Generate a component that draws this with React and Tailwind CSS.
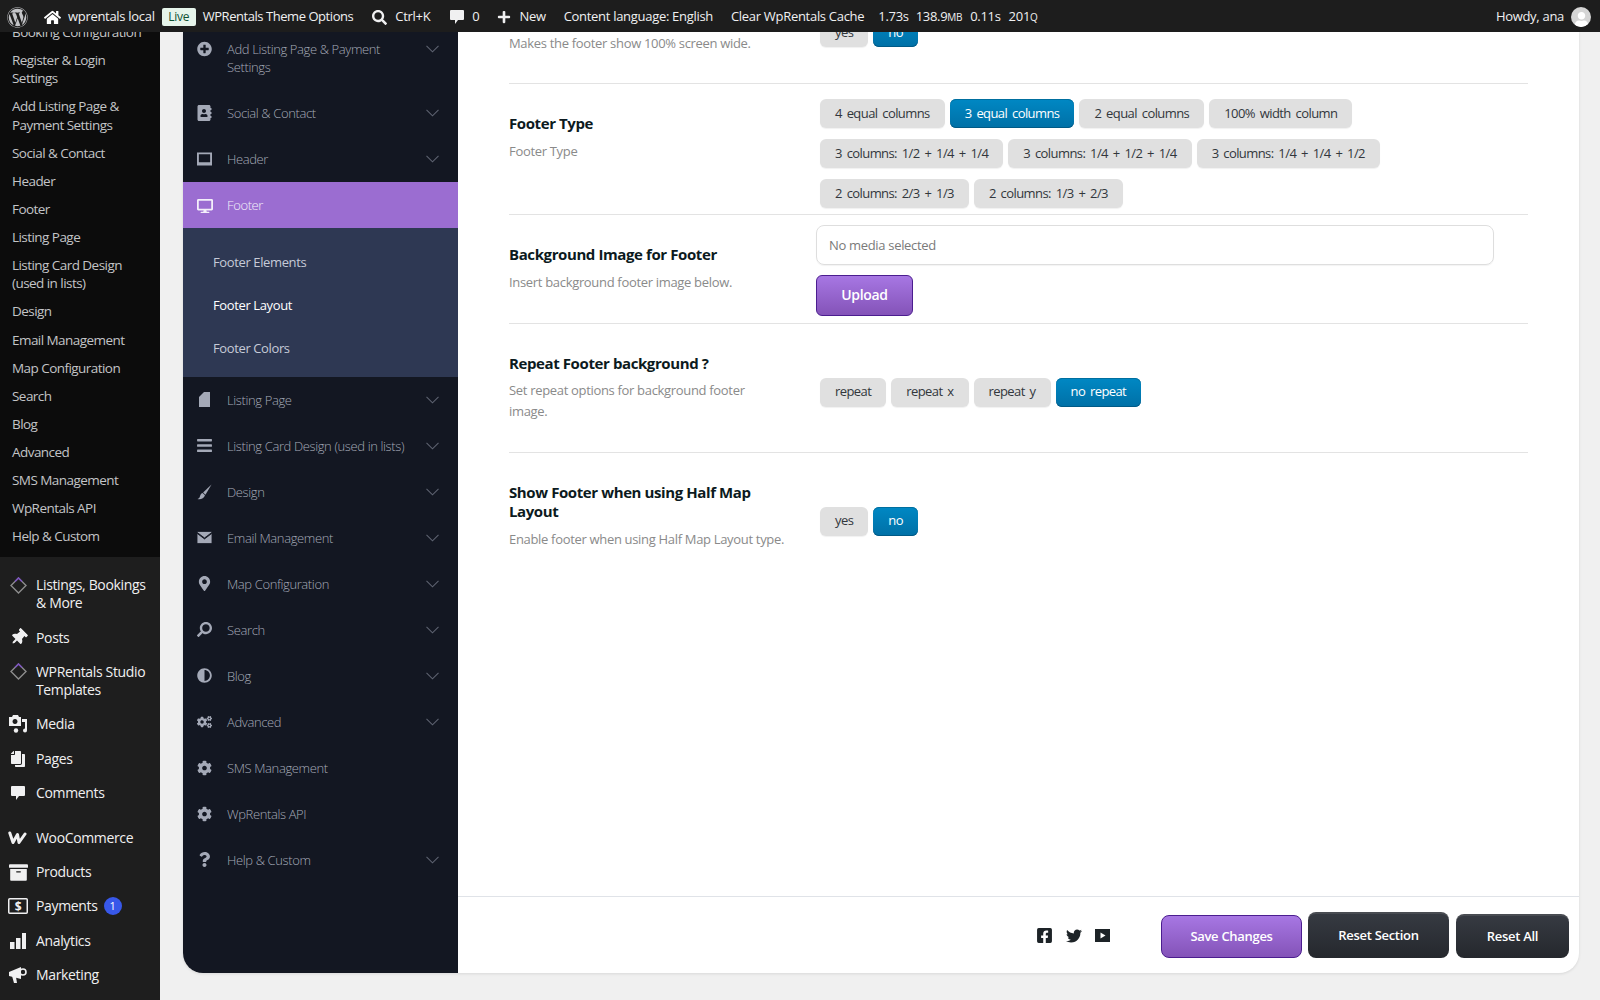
import React from 'react';
import {
  FaWordpress, FaHome, FaSearch, FaPlus, FaPlusCircle, FaAddressBook, FaDesktop, FaBars,
  FaMapMarkerAlt, FaAdjust, FaCogs, FaCog, FaQuestion, FaThumbtack, FaCopy, FaArchive,
  FaFacebookSquare, FaTwitter, FaUser,
} from 'react-icons/fa';

const Chevron = () => (
  <svg width="13" height="8" viewBox="0 0 13 8" fill="none" stroke="#5d6270" strokeWidth="1.1" className="shrink-0">
    <path d="M0.5 0.8 L6.5 6.8 L12.5 0.8" />
  </svg>
);

const Diamond = () => (
  <svg width="17" height="17" viewBox="0 0 17 17" fill="none" strokeWidth="1.4">
    <path d="M8.5 1 L16 8.5 L8.5 16 L1 8.5 Z" stroke="#8d8d8d" />
    <path d="M5 4.5 L8.5 1 L12 4.5" stroke="#7a4fc0" />
  </svg>
);

const Bubble = ({ size = 16 }) => (
  <svg width={size} height={size} viewBox="0 0 16 16" fill="currentColor">
    <path d="M2 1 H14 a1 1 0 0 1 1 1 V10 a1 1 0 0 1 -1 1 H9 L6 15 V11 H2 a1 1 0 0 1 -1 -1 V2 a1 1 0 0 1 1 -1 Z" />
  </svg>
);

const MediaIcon = () => (
  <svg width="20" height="20" viewBox="0 0 20 20" fill="currentColor">
    <path d="M1 3 H4 L5 1 H10 L11 3 H13 V12 H1 Z M7 5 a2.5 2.5 0 1 0 0.01 0 Z" fillRule="evenodd" />
    <path d="M14 5 H19 V16.5 a2 2 0 1 1 -2 -2 V8 H14 Z" />
    <circle cx="8" cy="16.5" r="2.2" />
  </svg>
);

const PaymentIcon = () => (
  <svg width="20" height="16" viewBox="0 0 20 16" fill="none" stroke="currentColor">
    <rect x="0.75" y="0.75" width="18.5" height="14.5" rx="1" strokeWidth="1.5" />
    <text x="10" y="12.5" textAnchor="middle" fontSize="12" fontWeight="700" fill="currentColor" stroke="none" fontFamily="Open Sans">$</text>
  </svg>
);

const BarsIcon = () => (
  <svg width="18" height="18" viewBox="0 0 18 18" fill="currentColor">
    <rect x="1" y="10" width="4.5" height="7" />
    <rect x="7" y="6" width="4.5" height="11" />
    <rect x="13" y="1" width="4" height="16" />
  </svg>
);

const WooIcon = () => (
  <svg width="20" height="14" viewBox="0 0 20 14" fill="none" stroke="currentColor" strokeWidth="3" strokeLinejoin="round" strokeLinecap="round">
    <path d="M1.8 2 L5 11.5 L9.5 3.5 L11 11.5 L17 3" />
  </svg>
);

const Megaphone = () => (
  <svg width="18" height="20" viewBox="0 0 18 20" fill="currentColor">
    <path d="M0 7 L12 2 V14 L0 11 Z" />
    <path d="M3 11 L7 12 L8 18 L5 18 Z" />
    <circle cx="14" cy="7" r="3" fill="none" stroke="currentColor" strokeWidth="1.6" />
  </svg>
);

const PageIcon = () => (
  <svg width="11" height="15" viewBox="0 0 11 15" fill="currentColor">
    <path d="M5 0 H11 V15 H0 V5 Z" />
  </svg>
);

const ScreenIcon = () => (
  <svg width="16" height="14" viewBox="0 0 16 14" fill="currentColor">
    <path d="M0 0 H16 V14 H0 Z M2 2 V10.5 H14 V2 Z" fillRule="evenodd" />
  </svg>
);

const BrushIcon = () => (
  <svg width="16" height="16" viewBox="0 0 16 16" fill="currentColor">
    <path d="M15.5 0 L6.5 8.5 L9 11 Z" />
    <path d="M6 9 C4 9.5 3.5 11.5 3 13 C2.5 14.5 1.5 15 0.5 15.5 C3.5 16.5 7.5 15 8.5 11.5 Z" />
  </svg>
);

const MailIcon = () => (
  <svg width="16" height="13" viewBox="0 0 16 13" fill="currentColor" stroke="#131722" strokeWidth="0.9">
    <path d="M0 1 L8 7 L16 1 V0 H0 Z" />
    <path d="M0 2 V13 H16 V2 L8 8 Z" />
  </svg>
);

const YoutubeIcon = () => (
  <svg width="15" height="13" viewBox="0 0 15 13">
    <rect width="15" height="13" fill="#1d2327" />
    <path d="M5.5 3.5 L10.5 6.5 L5.5 9.5 Z" fill="#fff" />
  </svg>
);

const wpSub = [
  ['Booking Configuration'], ['Register & Login', 'Settings'], ['Add Listing Page &', 'Payment Settings'],
  ['Social & Contact'], ['Header'], ['Footer'], ['Listing Page'], ['Listing Card Design', '(used in lists)'],
  ['Design'], ['Email Management'], ['Map Configuration'], ['Search'], ['Blog'], ['Advanced'],
  ['SMS Management'], ['WpRentals API'], ['Help & Custom'],
];

const wpMenu = [
  { lines: ['Listings, Bookings', '& More'], icon: <Diamond /> },
  { lines: ['Posts'], icon: <FaThumbtack size={17} className="rotate-45" /> },
  { lines: ['WPRentals Studio', 'Templates'], icon: <Diamond /> },
  { lines: ['Media'], icon: <MediaIcon /> },
  { lines: ['Pages'], icon: <FaCopy size={16} className="-scale-x-100" /> },
  { lines: ['Comments'], icon: <Bubble /> },
  { lines: ['WooCommerce'], icon: <WooIcon />, sep: true },
  { lines: ['Products'], icon: <FaArchive size={19} /> },
  { lines: ['Payments'], icon: <PaymentIcon />, badge: '1' },
  { lines: ['Analytics'], icon: <BarsIcon /> },
  { lines: ['Marketing'], icon: <Megaphone /> },
];

const panelTop = [
  { label: 'Add Listing Page & Payment', label2: 'Settings', icon: <FaPlusCircle size={16} />, more: true },
  { label: 'Social & Contact', icon: <FaAddressBook size={16} />, more: true },
  { label: 'Header', icon: <ScreenIcon />, more: true },
];

const panelBottom = [
  { label: 'Listing Page', icon: <PageIcon />, more: true },
  { label: 'Listing Card Design (used in lists)', icon: <FaBars size={17} />, more: true },
  { label: 'Design', icon: <BrushIcon />, more: true },
  { label: 'Email Management', icon: <MailIcon />, more: true },
  { label: 'Map Configuration', icon: <FaMapMarkerAlt size={15} />, more: true },
  { label: 'Search', icon: <FaSearch size={15} className="-scale-x-100" />, more: true },
  { label: 'Blog', icon: <FaAdjust size={15} />, more: true },
  { label: 'Advanced', icon: <FaCogs size={16} />, more: true },
  { label: 'SMS Management', icon: <FaCog size={16} /> },
  { label: 'WpRentals API', icon: <FaCog size={16} /> },
  { label: 'Help & Custom', icon: <FaQuestion size={15} />, more: true },
];

function PanelRow({ item }) {
  return (
    <div className="flex items-start pl-[14px] pr-[19px] py-[14px] text-[13px] leading-[18px] tracking-[-0.38px] text-[#a4a9b7] font-light">
      <span className="w-[15px] h-[18px] flex items-center justify-center shrink-0">{item.icon}</span>
      <span className="ml-[15px] flex-1 whitespace-nowrap">
        {item.label}
        {item.label2 && <><br />{item.label2}</>}
      </span>
      {item.more && <span className="h-[18px] flex items-center"><Chevron /></span>}
    </div>
  );
}

function Btn({ children, on }) {
  return (
    <span className={`h-[29px] px-[15px] rounded-[6px] flex items-center whitespace-nowrap text-[13px] tracking-[-0.58px] [word-spacing:2px] ${on ? 'bg-gradient-to-b from-[#0088c4] to-[#0070a6] shadow-[inset_0_-1px_0_#005a86,inset_0_1px_0_#006f9f] text-white' : 'bg-[#e0e0e0] text-[#32373c] shadow-[0_1px_1px_rgba(0,0,0,0.06)]'}`}>
      {children}
    </span>
  );
}

function Left({ title, title2, sub, sub2, pt }) {
  return (
    <div className={`w-[311px] shrink-0 ${pt}`}>
      <div className="text-[15px] leading-[19.5px] font-bold tracking-[-0.4px] text-[#0c1a20]">
        {title}
        {title2 && <><br />{title2}</>}
      </div>
      <div className="mt-[7px] text-[13px] leading-[21px] tracking-[-0.32px] text-[#8a8a8a]">
        {sub}
        {sub2 && <><br />{sub2}</>}
      </div>
    </div>
  );
}

export default function App() {
  return (
    <div className="h-screen w-full overflow-hidden bg-[#f0f0f0] flex flex-col font-['Open_Sans',sans-serif]">
      {/* admin bar */}
      <header className="h-8 shrink-0 pt-[2px] bg-[#1d1d1d] text-[#f0f0f1] text-[13px] tracking-[-0.3px] flex items-center whitespace-nowrap relative z-10">
        <FaWordpress size={21} className="ml-[7px] text-[#c3c4c7]" />
        <FaHome size={17} className="ml-[16px] text-white" />
        <span className="ml-[7px]">wprentals local</span>
        <span className="ml-[7px] h-[18px] w-[34px] rounded-[2px] bg-[#e6f4ea] text-[#0f5132] text-[12px] flex items-center justify-center">Live</span>
        <span className="ml-[7px] tracking-[-0.45px]">WPRentals Theme Options</span>
        <FaSearch size={15} className="ml-[19px]" />
        <span className="ml-[8px]">Ctrl+K</span>
        <span className="ml-[19px] text-[#f0f0f1]"><Bubble /></span>
        <span className="ml-[7px]">0</span>
        <FaPlus size={14} className="ml-[18px]" />
        <span className="ml-[8px]">New</span>
        <span className="ml-[18px]">Content language: English</span>
        <span className="ml-[18px]">Clear WpRentals Cache</span>
        <span className="ml-[14px]">1.73s</span>
        <span className="ml-[7px]">138.9<span className="text-[10px]">MB</span></span>
        <span className="ml-[8px]">0.11s</span>
        <span className="ml-[8px]">201<span className="text-[10px]">Q</span></span>
        <span className="ml-auto">Howdy, ana</span>
        <span className="ml-[7px] mr-[9px] w-5 h-5 rounded-full bg-[#d5d5d5] overflow-hidden flex items-end justify-center">
          <FaUser size={15} className="text-white" />
        </span>
      </header>

      <div className="flex-1 flex min-h-0">
        {/* wp menu */}
        <aside className="w-40 shrink-0 bg-[#1e1e1e] overflow-hidden text-[14px] leading-[18.2px] tracking-[-0.35px]">
          <div className="bg-[#0c0c0c] -mt-[14px] pb-[6.4px] text-[#c3c4c7] text-[13.5px] leading-[18.13px] tracking-[-0.55px]">
            {wpSub.map((lines) => (
              <div key={lines[0]} className="px-3 py-[5px]">
                {lines.map((l) => <div key={l}>{l}</div>)}
              </div>
            ))}
          </div>
          <div className="pt-[11.4px] text-[#f0f0f1]">
            {wpMenu.map((m) => (
              <div key={m.lines[0]} className={`flex items-start py-2 ${m.sep ? 'mt-[11px]' : ''}`}>
                <span className="w-[36px] h-[18px] shrink-0 flex items-center justify-center">{m.icon}</span>
                <span className="flex-1">
                  {m.lines.map((l, i) => (
                    <div key={l} className="flex items-center">
                      {l}
                      {m.badge && i === 0 && (
                        <span className="ml-[6px] w-[18px] h-[18px] rounded-full bg-[#3858e9] text-white text-[11px] flex items-center justify-center">{m.badge}</span>
                      )}
                    </div>
                  ))}
                </span>
              </div>
            ))}
          </div>
        </aside>

        {/* options panel */}
        <div className="ml-[23px] w-[1396px] h-[941px] flex overflow-hidden rounded-b-[20px] bg-white shadow-[0_1px_3px_rgba(0,0,0,0.1)]">
          <nav className="w-[275px] shrink-0 bg-[#131722]">
            <div className="-mt-[6px]">
              {panelTop.map((p) => <PanelRow key={p.label} item={p} />)}
            </div>
            <div className="h-[46px] -mt-[0.5px] pt-[2px] bg-[#9b6dd1] flex items-center pl-[14px] text-[13px] tracking-[-0.38px] text-[#f3effa] font-light">
              <FaDesktop size={16} />
              <span className="ml-[14px]">Footer</span>
            </div>
            <div className="h-[149px] bg-[#2e3853] pt-[14px] text-[13px] tracking-[-0.38px] text-[#c6cbd8]">
              <div className="h-[43px] pl-[30px] flex items-center">Footer Elements</div>
              <div className="h-[43px] pl-[30px] flex items-center text-white">Footer Layout</div>
              <div className="h-[43px] pl-[30px] flex items-center">Footer Colors</div>
            </div>
            {panelBottom.map((p) => <PanelRow key={p.label} item={p} />)}
          </nav>

          <main className="flex-1 min-w-0 flex flex-col">
            <div className="flex-1 min-h-0 overflow-hidden px-[51px]">
              <section className="-mt-[14px] h-[66px] border-b border-[#e3e3e3] flex">
                <div className="w-[311px] shrink-0 pt-[15px] text-[13px] leading-[21px] tracking-[-0.32px] text-[#8a8a8a]">Makes the footer show 100% screen wide.</div>
                <div className="flex gap-[5px]"><Btn>yes</Btn><Btn on>no</Btn></div>
              </section>

              <section className="h-[131px] border-b border-[#e3e3e3] flex">
                <Left title="Footer Type" sub="Footer Type" pt="pt-[30px]" />
                <div className="pt-[15px] flex flex-col gap-[11px]">
                  <div className="flex gap-[5px]"><Btn>4 equal columns</Btn><Btn on>3 equal columns</Btn><Btn>2 equal columns</Btn><Btn>100% width column</Btn></div>
                  <div className="flex gap-[5px]"><Btn>3 columns: 1/2 + 1/4 + 1/4</Btn><Btn>3 columns: 1/4 + 1/2 + 1/4</Btn><Btn>3 columns: 1/4 + 1/4 + 1/2</Btn></div>
                  <div className="flex gap-[5px]"><Btn>2 columns: 2/3 + 1/3</Btn><Btn>2 columns: 1/3 + 2/3</Btn></div>
                </div>
              </section>

              <section className="h-[108.5px] border-b border-[#e3e3e3] flex">
                <Left title="Background Image for Footer" sub="Insert background footer image below." pt="pt-[30px]" />
                <div className="-ml-1 pt-[9.5px] flex-1">
                  <div className="w-[678px] h-[40px] pt-[2px] rounded-[8px] border border-[#dedede] shadow-[0_1px_1px_rgba(0,0,0,0.05)] flex items-center pl-[12px] text-[13px] tracking-[-0.32px] text-[#7a7a7a]">No media selected</div>
                  <button className="mt-[10px] w-[97px] h-[41px] pb-[1px] rounded-[6px] border border-[#4b1d8f] bg-gradient-to-b from-[#a777e3] to-[#8453b8] text-white text-[14px] tracking-[-0.3px] font-semibold">Upload</button>
                </div>
              </section>

              <section className="h-[129px] border-b border-[#e3e3e3] flex">
                <Left title="Repeat Footer background ?" sub="Set repeat options for background footer" sub2="image." pt="pt-[30px]" />
                <div className="pt-[54px] flex gap-[5px]"><Btn>repeat</Btn><Btn>repeat x</Btn><Btn>repeat y</Btn><Btn on>no repeat</Btn></div>
              </section>

              <section className="flex">
                <Left title="Show Footer when using Half Map" title2="Layout" sub="Enable footer when using Half Map Layout type." pt="pt-[30px]" />
                <div className="pt-[54px] flex gap-[5px]"><Btn>yes</Btn><Btn on>no</Btn></div>
              </section>
            </div>

            {/* save bar */}
            <div className="h-[77px] shrink-0 border-t border-[#e0e3e8] flex items-start text-white">
              <div className="ml-auto mt-[30px] flex items-center gap-[13px] text-[#1d2327]">
                <FaFacebookSquare size={17} />
                <FaTwitter size={16} />
                <YoutubeIcon />
              </div>
              <button className="ml-[51px] mt-[18px] w-[141px] h-[43px] rounded-[8px] border border-[#4b1d8f] bg-gradient-to-b from-[#a777e3] to-[#8453b8] text-[13px] tracking-[-0.3px] font-semibold">Save Changes</button>
              <button className="ml-[6px] mt-[15px] w-[141px] h-[46px] rounded-[8px] border-t-2 border-[#494c52] bg-gradient-to-b from-[#363a42] to-[#25282d] text-[13px] tracking-[-0.3px] font-semibold">Reset Section</button>
              <button className="ml-[7px] mr-[10px] mt-[17px] w-[113px] h-[44px] rounded-[8px] border-t-2 border-[#494c52] bg-gradient-to-b from-[#363a42] to-[#25282d] text-[13px] tracking-[-0.3px] font-semibold">Reset All</button>
            </div>
          </main>
        </div>
      </div>
    </div>
  );
}
